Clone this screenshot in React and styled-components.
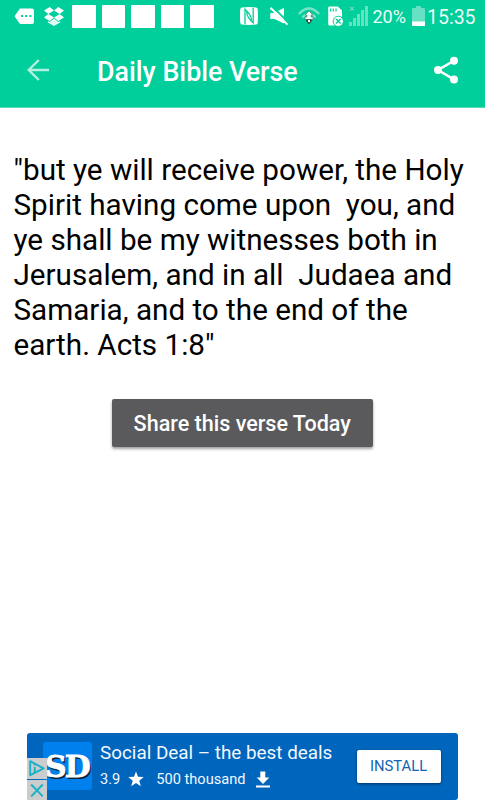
import React from 'react';
import styled, { createGlobalStyle } from 'styled-components';

const GlobalStyle = createGlobalStyle`
  * { box-sizing: border-box; }
  body { margin: 0; background: #fff; font-family: Roboto, "Liberation Sans", sans-serif; overflow: hidden; }
`;

const Screen = styled.main`
  display: flex;
  flex-direction: column;
  width: 485px;
  height: 800px;
  background: #fff;
`;

const Header = styled.header`
  flex: none;
  height: 108px;
  background: #00ce9b;
  border-bottom: 1px solid #55dcb9;
  color: #fff;
`;

const StatusBar = styled.div`
  display: flex;
  align-items: flex-start;
  height: 34px;
`;

const Glyph = styled.svg`
  display: block;
  flex: none;
  margin-left: ${(p) => p.$gap || 0}px;
  margin-top: ${(p) => p.$top || 0}px;
`;

const Notifications = styled.div`
  display: flex;
  gap: 6px;
  margin: 5px 0 0 8px;
`;

const Notification = styled.span`
  width: 23.5px;
  height: 23px;
  border-radius: 1px;
  background: #fff;
`;

const StatusText = styled.span`
  flex: none;
  width: ${(p) => p.$width}px;
  margin-left: ${(p) => p.$gap}px;
  font-size: ${(p) => p.$size}px;
  line-height: ${(p) => p.$line || 34}px;
  white-space: nowrap;
  opacity: 0.93;
`;

const Toolbar = styled.div`
  display: flex;
  align-items: center;
  height: 73px;
  padding: 0 26px 0 26px;
`;

const IconButton = styled.button`
  display: flex;
  flex: none;
  margin-top: -2px;
  padding: 0;
  border: 0;
  background: none;
  color: inherit;
`;

const Title = styled.h1`
  flex: 1;
  margin: 2px 0 0 47px;
  font-size: 26.8px;
  font-weight: 500;
  line-height: 32px;
  white-space: nowrap;
`;

const Verse = styled.p`
  margin: 44px 0 0 13.5px;
  color: #000;
  font-size: 29.65px;
  line-height: 35px;
  white-space: pre;
`;

const ShareButton = styled.button`
  flex: none;
  align-self: center;
  width: 260.5px;
  height: 48px;
  margin: 36.5px 0.5px 0 0;
  padding: 1px 0 0;
  border: 0;
  border-radius: 2px;
  background: #5a5a5c;
  box-shadow: 0 2px 3px rgba(0, 0, 0, 0.38);
  color: #fff;
  font: 500 21.55px Roboto, sans-serif;
  white-space: nowrap;
`;

const Banner = styled.aside`
  position: relative;
  display: flex;
  width: 431px;
  height: 67px;
  margin: auto 0 0 27px;
  padding: 9px 17px 0 16px;
  border-radius: 3px;
  background: #0066bd;
  color: #f2f8ff;
`;

const AppTile = styled.div`
  flex: none;
  width: 49px;
  height: 48px;
  border-radius: 3px;
  background: #0080ec;
  color: #fff;
  font: bold 30px/49px "DejaVu Serif", serif;
  letter-spacing: -2px;
  text-indent: 2px;
  -webkit-text-stroke: 0.8px #fff;
  text-shadow: 1.5px 1.5px 0.5px #123;
`;

const AdDetails = styled.div`
  flex: 1;
  margin-left: 8px;
  white-space: nowrap;
`;

const AdTitle = styled.div`
  font-size: 18.85px;
  line-height: 22px;
  margin-bottom: 2px;
`;

const AdStats = styled.div`
  display: flex;
  align-items: center;
  height: 26px;
  font-size: 14.6px;
`;

const Downloads = styled.span`
  margin-left: 12px;
`;

const InstallButton = styled.button`
  flex: none;
  width: 84px;
  height: 33px;
  margin-top: 8px;
  padding: 0 1px 2px 0;
  border: 0;
  border-radius: 2px;
  background: #fff;
  box-shadow: 0 1px 3px rgba(0, 0, 0, 0.5);
  color: #1263b3;
  font: 14.8px/30px Roboto, sans-serif;
`;

const AdControls = styled.div`
  position: absolute;
  left: 0;
  bottom: 0;
  display: flex;
  flex-direction: column;
  gap: 1px;
`;

const AdControl = styled.span`
  display: block;
  width: 20px;
  height: 20.5px;
  background: #cacccd;
`;

function StatusIcons() {
  return (
    <StatusBar>
      <Glyph $gap={14} $top={8} width="20" height="17">
        <path d="M6 .5h12q2 0 2 2V14q0 2-2 2H6L.5 8.2z" fill="#fff" />
        <g fill="#00ce9b"><rect x="7" y="7" width="2" height="2" /><rect x="11.2" y="7" width="2" height="2" /><rect x="15.4" y="7" width="2" height="2" /></g>
      </Glyph>
      <Glyph $gap={10} $top={7} width="20" height="20" fill="#fff">
        <path d="M5.7 0 10 3.5 4.3 7 0 3.6zM14.3 0 20 3.6 15.7 7 10 3.5zM4.3 7 10 10.5 5.7 14 0 10.6zM15.7 7 20 10.6 14.3 14 10 10.5z" />
        <path d="m10 11.6 4.3 3.5 1.8-1.2v1.6L10 19l-6.1-3.5v-1.6l1.8 1.2z" opacity=".9" />
      </Glyph>
      <Notifications>
        {[0, 1, 2, 3, 4].map((n) => <Notification key={n} />)}
      </Notifications>
      <Glyph $gap={26} $top={7} width="18" height="18">
        <path d="M2 .5Q9-.3 16 .5q1.5 0 1.7 1.6.6 7 0 13.8-.2 1.6-1.7 1.6-7 .8-14 0Q.5 17.5.3 15.9q-.6-7 0-13.8Q.5.5 2 .5" fill="#fff" />
        <path d="M5 17V2.2q6 5 6.6 11M13.2 1v14.8Q7.2 11 6.6 5" fill="none" stroke="#00ce9b" strokeWidth="1.3" />
      </Glyph>
      <Glyph $gap={12} $top={7} width="19" height="19">
        <path d="M.3 6h4.2L14 .8v15.8L4.5 12H.3z" fill="#fff" />
        <path d="m2.2-.7 18 18" stroke="#00ce9b" strokeWidth="1.8" />
        <path d="m.5 .8 17 16.8" stroke="#fff" strokeWidth="2" />
      </Glyph>
      <Glyph $gap={9} $top={7} width="22" height="18">
        <g fill="none" stroke="#78e4c8" strokeWidth="2.3"><path d="M.8 7Q11-4 21.2 7" /><path d="M4.4 10.6Q11 3 17.6 10.6" /></g>
        <path d="M11 3.8 14.8 8h-1.6v2h1.9v2.5H6.9V10h1.9V8H7.2z" fill="#fff" stroke="#477a68" strokeWidth=".7" />
        <path d="M9 12.5h4l1.3.7L11 17.4l-3.3-4.2z" fill="#34443c" />
        <path d="M10 13h2v1.4l-1 1-1-1z" fill="#fff" />
      </Glyph>
      <Glyph $gap={8} $top={6} width="16" height="21">
        <path d="M1.5.5h8.2L14 4.6v13.5q0 1.4-1.4 1.4H1.5Q.2 19.5.2 18V2Q.2.5 1.5.5" fill="#fff" />
        <path d="M2.6 2.5v3M5.3 2.5v3M8 2.5v3" stroke="#00ce9b" strokeWidth="1.2" />
        <circle cx="10.3" cy="15.3" r="5.1" fill="#fff" stroke="#00ce9b" strokeWidth="1" />
        <path d="m8 13 4.6 4.6M12.6 13 8 17.6" stroke="#00ce9b" strokeWidth="1.4" />
      </Glyph>
      <Glyph $gap={5} $top={6} width="19" height="20">
        <g fill="#68e0c2"><rect y="16" width="3" height="4" /><rect x="4" y="12" width="3" height="8" /><rect x="8" y="8" width="3" height="12" /><rect x="12" y="4" width="3" height="16" /><rect x="16" width="3" height="20" /></g>
        <path d="m1 .8 3.8 3.8M4.8.8 1 4.6" stroke="#68e0c2" strokeWidth="1.2" />
      </Glyph>
      <StatusText $gap={5} $width={34} $size={18}>20%</StatusText>
      <Glyph $gap={5} $top={6} width="13" height="20">
        <path d="M4 0h5v2h2.8Q13 2 13 3.2V20H0V3.2Q0 2 1.2 2H4z" fill="#67e1c3" />
        <path d="M0 15.5h13V20H0z" fill="#fff" />
      </Glyph>
      <StatusText $gap={2.5} $width={48} $size={19.5} $line={35}>15:35</StatusText>
    </StatusBar>
  );
}

export default function App() {
  return (
    <>
      <GlobalStyle />
      <Screen>
        <Header>
          <StatusIcons />
          <Toolbar>
            <IconButton aria-label="Back">
              <svg width="24" height="24" fill="none" stroke="#b5f0e1" strokeWidth="2.4"><path d="M23 12H2.5M12.8 2 2.7 12l10.1 10" /></svg>
            </IconButton>
            <Title>Daily Bible Verse</Title>
            <IconButton aria-label="Share">
              <svg width="26" height="28" fill="#fff">
                <path d="M21.2 4.7 5 14l16.2 9.6" fill="none" stroke="#fff" strokeWidth="2.5" />
                <circle cx="21" cy="4.7" r="4" /><circle cx="5" cy="14" r="4" /><circle cx="21" cy="23.4" r="4" />
              </svg>
            </IconButton>
          </Toolbar>
        </Header>
        <Verse>{`"but ye will receive power, the Holy
Spirit having come upon  you, and
ye shall be my witnesses both in
Jerusalem, and in all  Judaea and
Samaria, and to the end of the
earth. Acts 1:8"`}</Verse>
        <ShareButton>Share this verse Today</ShareButton>
        <Banner>
          <AppTile>SD</AppTile>
          <AdDetails>
            <AdTitle>Social Deal – the best deals</AdTitle>
            <AdStats>
              3.9
              <Glyph $gap={8} width="16" height="16" fill="#fff"><path d="m8 .5 2 5.3 5.7.3-4.4 3.6 1.5 5.5L8 12.1l-4.8 3.1 1.5-5.5L.3 6.1 6 5.8z" /></Glyph>
              <Downloads>500 thousand</Downloads>
              <Glyph $gap={10.5} width="14" height="17" fill="#fff"><path d="M4.3.5h5v6h4L7 13 .7 6.5h3.6zM0 14.5h14v2H0z" /></Glyph>
            </AdStats>
          </AdDetails>
          <InstallButton>INSTALL</InstallButton>
          <AdControls>
            <AdControl>
              <svg width="20" height="20" fill="none" stroke="#18b1c5" strokeWidth="1.9"><path d="M3.2 3.2v14L16.6 10.3z" strokeLinejoin="round" /><path d="M7.7 9v5.2M7.7 6v1.6" /></svg>
            </AdControl>
            <AdControl>
              <svg width="20" height="20" stroke="#18b1c5" strokeWidth="1.9"><path d="m4.2 4.5 11.6 11.8M15.8 4.5 4.2 16.3" /></svg>
            </AdControl>
          </AdControls>
        </Banner>
      </Screen>
    </>
  );
}
